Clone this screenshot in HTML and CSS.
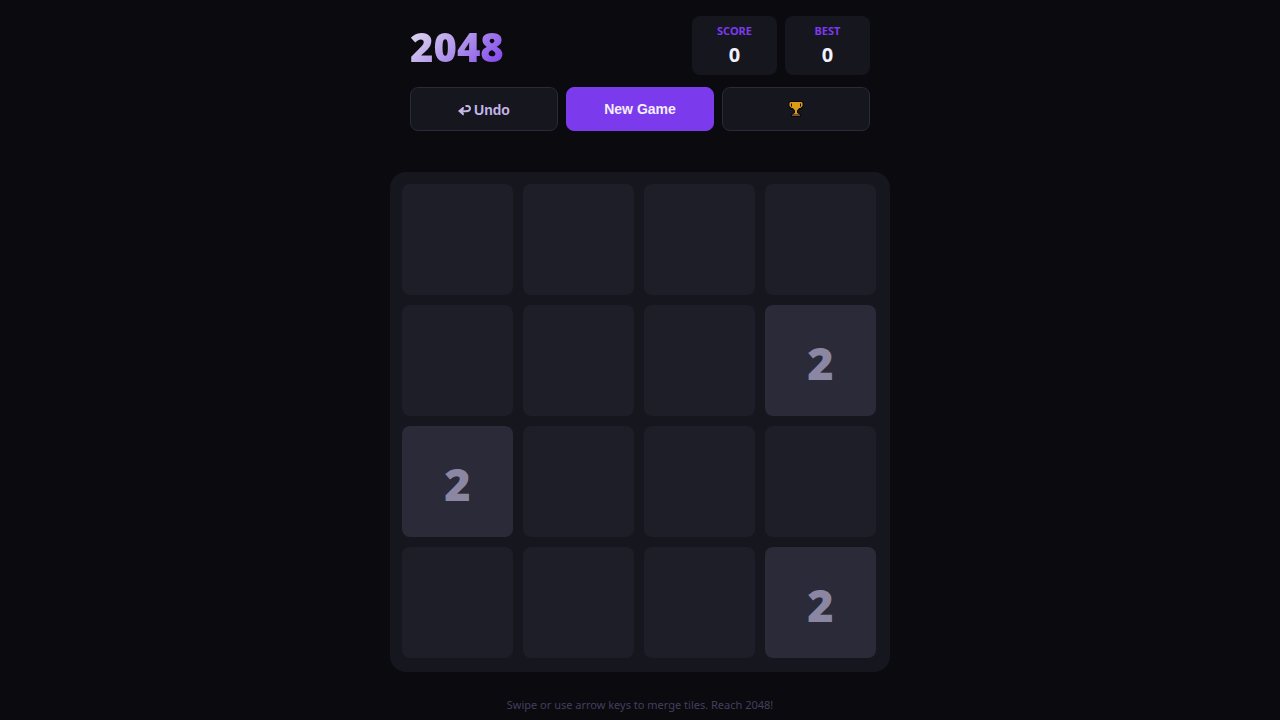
FILE: index.html
```html
<!DOCTYPE html>
<html lang="en">
<head>
  <meta charset="UTF-8">
  <meta name="viewport" content="width=device-width, initial-scale=1.0">
  <title>2048</title>
  <link rel="stylesheet" href="styles.css">
</head>
<body>

  <header class="header">
    <div class="top-row">
      <h1 class="title">2048</h1>
      <div class="scores">
        <div class="score-box">
          <div class="score-label">SCORE</div>
          <div class="score-value" id="score">0</div>
        </div>
        <div class="score-box">
          <div class="score-label">BEST</div>
          <div class="score-value" id="best">0</div>
        </div>
      </div>
    </div>
    <div class="controls">
      <button class="btn btn-undo" type="button">
        <svg width="14" height="12" viewBox="0 0 14 12">
          <path d="M7.500 2h2a2.500 2.500 0 0 1 2.500 2.500c0 2-2 2.700-4 2.700H3.500" fill="none" stroke="currentColor" stroke-width="2"/>
          <path d="M0 7l4.800-4h1v2.200L4.500 7.200l1.300 1.800v2.200h-1z" fill="currentColor"/>
        </svg>
        Undo
      </button>
      <button class="btn btn-primary" type="button">New Game</button>
      <button class="btn" type="button" aria-label="Leaderboard">
        <svg width="16" height="16" viewBox="0 0 16 16">
          <path d="M2 0h12l1.500 1.500V5.500L13 8h-1.500L10 10v1.500l3 1.500v3H3v-3l3-1.500V10L4.500 8H3L.5 5.500v-4z" fill="#0a0a0f"/>
          <path d="M2.500 1h11l1 1v3L12.500 7h-1.300L9 9.500V12l3 1.500H4L7 12V9.500L4.800 7H3.500L1.500 5V2z" fill="#dd9b1a"/>
          <path d="M3.500 2.500v3M12.500 2.500v3" stroke="#0a0a0f"/>
          <path d="M4 14.500h8" stroke="#7a5038"/>
        </svg>
      </button>
    </div>
  </header>

  <main class="board">
    <div class="tile"></div>
    <div class="tile"></div>
    <div class="tile"></div>
    <div class="tile"></div>

    <div class="tile"></div>
    <div class="tile"></div>
    <div class="tile"></div>
    <div class="tile tile-2">2</div>

    <div class="tile tile-2">2</div>
    <div class="tile"></div>
    <div class="tile"></div>
    <div class="tile"></div>

    <div class="tile"></div>
    <div class="tile"></div>
    <div class="tile"></div>
    <div class="tile tile-2">2</div>
  </main>

  <p class="hint">Swipe or use arrow keys to merge tiles. Reach 2048!</p>

</body>
</html>
```
FILE: styles.css
```css
* {
  box-sizing: border-box;
  margin: 0;
  padding: 0;
}

body {
  font-family: "Segoe UI", "Noto Sans", sans-serif;
  background: #0a0a0f;
  color: #f3f0ff;
  min-height: 100vh;
  display: flex;
  flex-direction: column;
  align-items: center;
  overflow: hidden;
}

.header {
  width: 100%;
  max-width: 500px;
  padding: 16px 20px 0;
}

.top-row {
  display: flex;
  justify-content: space-between;
  align-items: center;
  margin-bottom: 12px;
}

.title {
  padding-top: 2px;
  font-size: 40px;
  line-height: 48px;
  font-weight: 900;
  background: linear-gradient(135deg, #d8ccee 15%, #a98bea 55%, #7c3aed);
  -webkit-background-clip: text;
  background-clip: text;
  color: transparent;
}

.scores {
  display: flex;
  gap: 8px;
}

.score-box {
  min-width: 85px;
  padding: 8px 16px 4px;
  background: #16161e;
  border-radius: 8px;
  text-align: center;
}

.score-label {
  color: #7c3aed;
  font-size: 11px;
  line-height: 14px;
  font-weight: 700;
}

.score-value {
  font-size: 20px;
  line-height: 33px;
  font-weight: 700;
}

.controls {
  display: grid;
  grid-template-columns: repeat(3, 1fr);
  gap: 8px;
}

.btn {
  display: flex;
  justify-content: center;
  align-items: center;
  gap: 2px;
  height: 44px;
  background: #16161e;
  color: #c4b5e8;
  border: 1px solid #2a2a38;
  border-radius: 8px;
  font-family: Arial, "Liberation Sans", sans-serif;
  font-size: 14px;
  font-weight: 700;
  cursor: pointer;
}

.btn-undo {
  padding-top: 2px;
}

.btn-primary {
  background: #7c3aed;
  border-color: #7c3aed;
  color: #f3f0ff;
}

.board {
  width: 100%;
  max-width: 500px;
  margin-top: 41px;
  padding: 12px 14px 14px 12px;
  background: #16161e;
  border-radius: 16px;
  display: grid;
  grid-template-columns: repeat(4, 1fr);
  gap: 10px;
}

.tile {
  aspect-ratio: 1;
  display: flex;
  justify-content: center;
  align-items: center;
  padding-top: 4px;
  background: #1e1e28;
  border-radius: 8px;
  font-size: 45px;
  line-height: 60px;
  font-weight: 900;
}

.tile-2 {
  background: #2a2a38;
  color: #8b87a3;
}

.hint {
  margin-top: 24px;
  color: #443f5c;
  font-size: 11px;
  line-height: 18px;
}
```
